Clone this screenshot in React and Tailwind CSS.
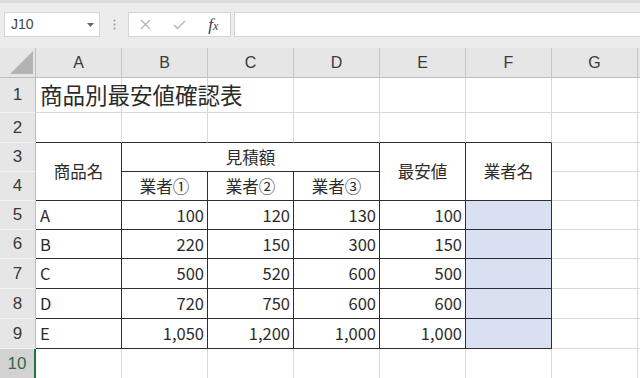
import React from "react";

const F = { fontFamily: '"Noto Sans CJK JP", "Noto Sans", sans-serif' };
const H = { fontFamily: '"Liberation Sans", Arial, sans-serif' };

const G = "border-r border-b border-r-[#d9d9d9] border-b-[#d9d9d9]";
const T = "border-r border-b border-r-[#2e2e2e] border-b-[#2e2e2e]";
const TOPROW = "border-r border-b border-r-[#d9d9d9] border-b-[#2e2e2e]";

function RH({ n, sel }) {
  return (
    <div
      style={H}
      className={
        sel
          ? "flex items-center justify-center bg-[#d2d2d2] text-[#2d6a45] text-[17px] border-r-2 border-r-[#217346] border-b border-b-[#c8c8c8]"
          : "flex items-center justify-center bg-[#e6e6e6] text-[#3a3a3a] text-[17px] border-r border-r-[#bdbdbd] border-b border-b-[#f2f2f2]"
      }
    >
      {n}
    </div>
  );
}

function C({ cls, children, align = "left", extra = "" }) {
  const al =
    align === "right"
      ? "justify-end pr-[3px]"
      : align === "center"
      ? "justify-center"
      : "justify-start pl-[4px]";
  return (
    <div
      style={F}
      className={`flex items-center ${al} text-[16.5px] text-[#2b2b2b] leading-none ${cls} ${extra}`}
    >
      {children}
    </div>
  );
}

export default function App() {
  const letters = ["A", "B", "C", "D", "E", "F", "G"];
  const data = [
    ["A", "100", "120", "130", "100"],
    ["B", "220", "150", "300", "150"],
    ["C", "500", "520", "600", "500"],
    ["D", "720", "750", "600", "600"],
    ["E", "1,050", "1,200", "1,000", "1,000"],
  ];
  return (
    <div className="w-[640px] h-[378px] overflow-hidden bg-white">
      {/* formula bar */}
      <div className="h-[48px] bg-[#ececec] border-t-[3px] border-t-[#dcdcdc] flex items-start pt-[9px] pl-[4px]">
        <div className="w-[96px] h-[25px] bg-white border border-[#d4d4d4] flex items-center justify-between pl-[6px] pr-[5px]">
          <span style={H} className="text-[14px] text-[#444]">J10</span>
          <svg width="7" height="4" viewBox="0 0 7 4">
            <path d="M0 0 L7 0 L3.5 4 Z" fill="#666" />
          </svg>
        </div>
        <div className="w-[28px] h-[25px] flex items-center justify-center">
          <svg width="3" height="11" viewBox="0 0 3 11">
            <circle cx="1.5" cy="1.5" r="1" fill="#9a9a9a" />
            <circle cx="1.5" cy="5.5" r="1" fill="#9a9a9a" />
            <circle cx="1.5" cy="9.5" r="1" fill="#9a9a9a" />
          </svg>
        </div>
        <div className="w-[103px] h-[25px] bg-white border border-[#d4d4d4] flex items-center">
          <div className="w-[34px] flex justify-center">
            <svg width="11" height="11" viewBox="0 0 11 11">
              <path d="M1 1 L10 10 M10 1 L1 10" stroke="#b5b5b5" strokeWidth="1.3" />
            </svg>
          </div>
          <div className="w-[34px] flex justify-center">
            <svg width="13" height="10" viewBox="0 0 13 10">
              <path d="M1 5 L4.5 8.5 L12 1" stroke="#b5b5b5" strokeWidth="1.4" fill="none" />
            </svg>
          </div>
          <div className="w-[34px] flex justify-center">
            <span
              style={{ fontFamily: '"Liberation Serif", serif' }}
              className="italic text-[17px] text-[#444] leading-none"
            >
              f<span className="text-[12px]">x</span>
            </span>
          </div>
        </div>
        <div className="flex-1 ml-[3px] h-[25px] bg-white border-y border-l border-[#d4d4d4]" />
      </div>

      {/* sheet grid */}
      <div className="grid grid-cols-[36px_86px_86px_86px_86px_86px_86px_86px_1fr] grid-rows-[30px_35px_30px_29px_29px_29px_29px_30px_30px_30px_30px]">
        {/* column header */}
        <div className="relative bg-[#e6e6e6] border-r border-b border-r-[#bdbdbd] border-b-[#bdbdbd]">
          <svg className="absolute left-[10px] top-[3px]" width="23" height="23" viewBox="0 0 23 23">
            <path d="M23 0 L23 23 L0 23 Z" fill="#b3b3b3" />
          </svg>
        </div>
        {letters.map((l) => (
          <div
            key={l}
            style={H}
            className="flex items-center justify-center bg-[#e6e6e6] text-[#3a3a3a] text-[16px] border-r border-b border-r-[#c6c6c6] border-b-[#bdbdbd]"
          >
            {l}
          </div>
        ))}
        <div className="bg-[#e6e6e6] border-b border-b-[#bdbdbd]" />

        {/* row 1 */}
        <RH n="1" />
        <div className={`relative ${G}`}>
          <span
            style={F}
            className="absolute left-[4px] top-[5px] whitespace-nowrap text-[22.5px] text-[#2b2b2b] leading-none"
          >
            商品別最安値確認表
          </span>
        </div>
        <div className={G} />
        <div className={G} />
        <div className={G} />
        <div className={G} />
        <div className={G} />
        <div className={G} />
        <div className="border-b border-b-[#d9d9d9]" />

        {/* row 2 */}
        <RH n="2" />
        <div className={TOPROW} />
        <div className={TOPROW} />
        <div className={TOPROW} />
        <div className={TOPROW} />
        <div className={TOPROW} />
        <div className={TOPROW} />
        <div className={G} />
        <div className="border-b border-b-[#d9d9d9]" />

        {/* row 3 */}
        <RH n="3" />
        <C cls={T} align="center" extra="row-span-2">商品名</C>
        <C cls={T} align="center" extra="col-span-3">見積額</C>
        <C cls={T} align="center" extra="row-span-2">最安値</C>
        <C cls={T} align="center" extra="row-span-2">業者名</C>
        <div className={G} />
        <div className="border-b border-b-[#d9d9d9]" />

        {/* row 4 */}
        <RH n="4" />
        <C cls={T} align="center">業者①</C>
        <C cls={T} align="center">業者②</C>
        <C cls={T} align="center">業者③</C>
        <div className={G} />
        <div className="border-b border-b-[#d9d9d9]" />

        {/* data rows */}
        {data.map((r, i) => (
          <React.Fragment key={i}>
            <RH n={String(5 + i)} />
            <C cls={T}>{r[0]}</C>
            <C cls={T} align="right">{r[1]}</C>
            <C cls={T} align="right">{r[2]}</C>
            <C cls={T} align="right">{r[3]}</C>
            <C cls={T} align="right">{r[4]}</C>
            <div className={`${T} bg-[#d9e0f1]`} />
            <div className={G} />
            <div className="border-b border-b-[#d9d9d9]" />
          </React.Fragment>
        ))}

        {/* row 10 */}
        <RH n="10" sel />
        <div className={G} />
        <div className={G} />
        <div className={G} />
        <div className={G} />
        <div className={G} />
        <div className={G} />
        <div className={G} />
        <div className="border-b border-b-[#d9d9d9]" />
      </div>
    </div>
  );
}
